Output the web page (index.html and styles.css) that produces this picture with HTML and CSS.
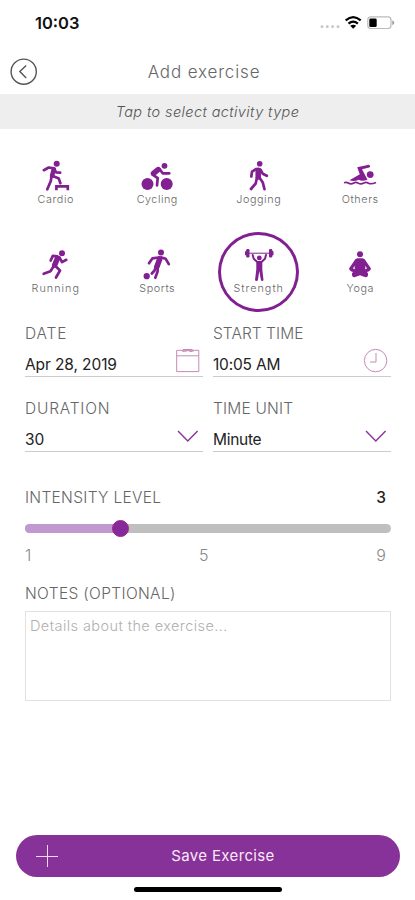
FILE: index.html
```html
<!DOCTYPE html>
<html lang="en">
<head>
<meta charset="utf-8">
<title>Add exercise</title>
<link rel="stylesheet" href="styles.css">
</head>
<body>
<div class="screen">
  <div class="status">
    <span class="clock">10:03</span>
    <svg class="status-icons" viewBox="318 12 80 22" width="80" height="22">
      <g fill="#c4c4c4"><circle cx="322" cy="26.7" r="1.4"/><circle cx="327.3" cy="26.7" r="1.4"/><circle cx="332.6" cy="26.7" r="1.4"/><circle cx="338" cy="26.7" r="1.4"/></g>
      <g fill="none" stroke="#000" stroke-width="2.2"><path d="M345.7 20.4Q353.2 14 360.7 20.4"/><path d="M348.5 23.7Q353.2 19.7 357.9 23.7"/></g>
      <path d="M350.2 25.7Q353.2 23.6 356.2 25.7L353.2 28.8Z"/>
      <rect x="367.8" y="16.9" width="23.2" height="11.6" rx="3" fill="none" stroke="#bbb" stroke-width="1.2"/>
      <path d="M392.3 20.2Q396.4 22.7 392.3 25.2Z" fill="#999"/>
      <rect x="369.3" y="18.5" width="7.4" height="8.6" rx="1.4"/>
    </svg>
  </div>
  <header class="header">
    <svg class="back" viewBox="0 0 28 28" width="28" height="28"><circle cx="13.7" cy="13.7" r="12.6"/><path d="M16.2 7.4L9.8 13.6L16.2 20"/></svg>
    <h1 class="title">Add exercise</h1>
  </header>
  <p class="hint"><span>Tap to select activity type</span></p>

  <div class="activities">
    <div class="tile">
      <svg viewBox="39 160 34 33" width="34" height="33"><circle cx="56.7" cy="163.8" r="3"/><g class="limb"><path class="w4" d="M53.8 169.2L52 176"/><path d="M54 168.4L48.7 167.5L43.8 170.2M54.5 169L56 172.3L60.2 172.6M51.6 176L50.8 181L47.3 189.3M52.8 176L58.8 178.6L60.4 183.2"/><path class="square" d="M56.4 190.3V186.3H67.8V190.3"/></g></svg>
      <span class="name cardio">Cardio</span>
    </div>
    <div class="tile">
      <svg viewBox="140.5 160 34 33" width="34" height="33"><circle cx="148" cy="184" r="6"/><circle cx="167.2" cy="184" r="6"/><circle cx="165" cy="165.8" r="2.9"/><g class="limb"><path class="w5" d="M158.6 169.6L154 173.4"/><path d="M160 169L163.2 173.3H169.8M153.2 174.6L158.2 178.2L157.5 185.3"/></g></svg>
      <span class="name cycling">Cycling</span>
    </div>
    <div class="tile">
      <svg viewBox="242 160 34 33" width="34" height="33"><circle cx="259.7" cy="163.8" r="2.8"/><g class="limb"><path class="w5" d="M258.2 170.2V177"/><path d="M256 169L252 171.7L251.3 176.5M260.5 169.6L262.7 173.7L266.8 175.8M257 177.5L255.7 183.5L251 189M259 177L262.8 182.6L264.5 189.2"/></g></svg>
      <span class="name jogging">Jogging</span>
    </div>
    <div class="tile">
      <svg viewBox="343 160 34 33" width="34" height="33"><circle cx="370.2" cy="174.6" r="3.4"/><path d="M349.5 180.3L359.8 174.2L357.2 167.2L368.8 164.8Q371.3 166 369.3 167.6L362 169.2L367.5 179.7Q362 181.7 358.7 179.8Q354 182 349.5 180.3Z"/><path class="wave" d="M344 182.8Q346.5 181.8 348.7 183.2Q351 184.6 353.8 182.9Q356 181.7 358.5 183.2Q361 184.6 363.8 182.9Q366.2 181.7 368.5 183.2Q371 184.6 376 182.5"/></svg>
      <span class="name others">Others</span>
    </div>
    <div class="tile">
      <svg viewBox="39 248.5 34 33" width="34" height="33"><circle cx="62" cy="252.8" r="3"/><g class="limb"><path class="w5" d="M57.4 258L54.7 264.5"/><path d="M57.5 255.8L52.8 255.4L50.7 260M59.5 257L62 261.6L66.3 259.3M53.8 265.5L50.5 270.7L43.7 273.3M55.4 265.5L60 270L56 277"/></g></svg>
      <span class="name running">Running</span>
    </div>
    <div class="tile">
      <svg viewBox="141 248.5 34 33" width="34" height="33"><circle cx="162" cy="252" r="3"/><circle cx="147.7" cy="275.7" r="3.1"/><g class="limb"><path class="w5" d="M160.8 258.3L158 266"/><path d="M159.5 257L153.5 257.8L150 262.7M162.5 257L166.7 258.3L169.8 263.7M158.7 266L158.6 271L156.3 277.3M156.7 266L155.6 270L152.8 273"/></g></svg>
      <span class="name sports">Sports</span>
    </div>
    <div class="tile selected">
      <svg viewBox="242 248.5 34 33" width="34" height="33"><circle cx="259.3" cy="257.4" r="2.4"/><rect x="246.2" y="248.6" width="3.3" height="8.4" rx="1.2"/><rect x="269" y="248.6" width="3.3" height="8.4" rx="1.2"/><rect x="245" y="250.6" width="2" height="4.4" rx="1"/><rect x="271.5" y="250.6" width="2" height="4.4" rx="1"/><path d="M249 252.2H269.5V253.2H249Z"/><path d="M256.3 260.5H262.3V269L263.5 279.7Q262.6 281 261 280L259.3 270.5L257.8 280Q256 281 255 279.7L256.3 269Z"/><g class="limb thin"><path d="M252.7 254.5L253.7 258.2L257 261.2M266 254.5L265 258.2L261.7 261.2"/></g></svg>
      <span class="name strength">Strength</span>
    </div>
    <div class="tile">
      <svg viewBox="343 248.5 34 33" width="34" height="33"><circle cx="360" cy="253.8" r="3"/><path d="M357.2 257.8H362.8Q365.4 258.5 366.2 261L371 268Q370.8 270.3 366.8 271.6Q369 273 367.5 276Q366 277.7 360 274.8Q354 277.7 352.5 276Q351 273 353.2 271.6Q349.2 270.3 349 268L353.8 261Q354.6 258.5 357.2 257.8Z"/><path d="M354.4 265.3L353 268L354.9 268.8ZM365.6 265.3L367 268L365.1 268.8Z" class="hole"/></svg>
      <span class="name yoga">Yoga</span>
    </div>
  </div>

  <div class="fields">
    <div class="field">
      <label class="label date">DATE</label>
      <div class="value"><span class="v-date">Apr 28, 2019</span>
        <svg class="pic faint" viewBox="0 0 26 26" width="26" height="26"><path d="M1.7 2.3H23.8V23.6H1.7ZM1.7 7.8H23.8"/><path d="M6.5 2.7Q9 4.7 12.8 2.5Q16 4.7 19 2.7M8 1.5H17.5"/></svg></div>
    </div>
    <div class="field">
      <label class="label start">START TIME</label>
      <div class="value"><span class="v-time">10:05 AM</span>
        <svg class="pic faint" viewBox="0 0 26 26" width="26" height="26"><circle cx="12.6" cy="12.6" r="11.2"/><path d="M13 5V14H7"/></svg></div>
    </div>
    <div class="field">
      <label class="label duration">DURATION</label>
      <div class="value"><span class="v-num">30</span>
        <svg class="pic" viewBox="0 0 26 26" width="26" height="26"><path d="M3 8L12.8 18L22.6 8"/></svg></div>
    </div>
    <div class="field">
      <label class="label unit">TIME UNIT</label>
      <div class="value"><span class="v-unit">Minute</span>
        <svg class="pic" viewBox="0 0 26 26" width="26" height="26"><path d="M3 8L12.8 18L22.6 8"/></svg></div>
    </div>
  </div>

  <div class="intensity">
    <div class="row"><span class="label level">INTENSITY LEVEL</span><span class="level-value">3</span></div>
    <div class="track"><div class="fill"><span class="thumb"></span></div></div>
    <div class="scale"><span>1</span><span>5</span><span>9</span></div>
  </div>

  <div class="notes">
    <span class="label optional">NOTES (OPTIONAL)</span>
    <div class="box"><span class="placeholder">Details about the exercise...</span></div>
  </div>

  <div class="save">
    <svg class="plus" viewBox="0 0 24 24" width="24" height="24"><path d="M1 12.5H23M12.5 1V23"/></svg>
    <span class="save-text">Save Exercise</span>
  </div>
  <div class="home"></div>
</div>
</body>
</html>
```
FILE: styles.css
```css
* { box-sizing: border-box; }
body { margin: 0; background: #fff; font-family: Inter, "Liberation Sans", sans-serif; }
.screen { width: 415px; height: 900px; display: flex; flex-direction: column; background: #fff; overflow: hidden; }
span, label { white-space: nowrap; }

.status { height: 50px; display: flex; justify-content: space-between; padding: 12px 17px 0 35px; }
.clock { font-size: 16.5px; font-weight: 600; line-height: 22px; color: #111; }

.header { height: 44px; display: grid; grid-template-columns: 28px 1fr 28px; align-items: center; padding: 0 14px 0 10px; }
.back { fill: none; stroke: #555; stroke-width: 1.4; }
.title { margin: 0 3px 0 0; text-align: center; font-size: 17px; font-weight: 300; line-height: 24px; letter-spacing: 0.85px; color: #666; }
.hint { margin: 0; height: 35px; background: #eee; text-align: center; font-size: 14.5px; font-style: italic; font-weight: 300; line-height: 35px; letter-spacing: 0.4px; color: #555; }

.activities { display: grid; grid-template-columns: repeat(4, 101.5px); grid-auto-rows: 80px; row-gap: 8.5px; padding: 14px 0 0 5px; }
.tile { width: 81px; height: 80px; justify-self: center; display: flex; flex-direction: column; align-items: center; padding-top: 17px; border-radius: 50%; fill: #821f91; }
.selected { box-shadow: inset 0 0 0 3px #821f91; }
.tile svg { flex: none; }
.limb { fill: none; stroke: #821f91; stroke-width: 2.7; stroke-linecap: round; stroke-linejoin: round; }
.thin { stroke-width: 2; }
.w4 { stroke-width: 4.5; }
.w5 { stroke-width: 5.5; }
.square { stroke-linecap: butt; stroke-linejoin: miter; }
.wave { fill: none; stroke: #821f91; stroke-width: 1.7; }
.hole { fill: #fff; }
.name { font-size: 10.8px; font-weight: 300; line-height: 14px; letter-spacing: 0.6px; color: #666; }
.cycling { letter-spacing: 0.5px; }
.running, .strength { letter-spacing: 1px; }

.fields { display: grid; grid-template-columns: 178px 178px; column-gap: 10px; grid-auto-rows: 75px; padding: 10.5px 0 0 25px; }
.field { display: flex; flex-direction: column; }
.label { font-size: 15.5px; font-weight: 300; line-height: 24px; letter-spacing: 0.3px; color: #666; }
.date { letter-spacing: 0.9px; }
.start { letter-spacing: 0.05px; }
.duration { letter-spacing: 0.8px; }
.unit { letter-spacing: 0.2px; }
.value { height: 31px; display: flex; align-items: center; justify-content: space-between; border-bottom: 1px solid #ccc; padding: 0 2px 0 0; font-size: 15.5px; line-height: 22px; color: #222; }
.value span { padding-top: 8px; }
.v-date { letter-spacing: -0.1px; }
.v-time { letter-spacing: -0.2px; }
.v-unit { letter-spacing: -0.3px; }
.pic { fill: none; stroke: #8a3299; stroke-width: 1.4; }
.faint { stroke: #c58ab4; stroke-width: 1; }

.intensity { padding: 14px 24px 0 25px; }
.row { display: flex; justify-content: space-between; padding-right: 5px; }
.level-value { font-size: 15.5px; font-weight: 500; line-height: 24px; color: #222; }
.track { height: 9px; margin-top: 14px; border-radius: 5px; background: #bfbfbf; }
.fill { width: 96px; height: 9px; border-radius: 5px 0 0 5px; background: #c198cf; display: flex; align-items: center; justify-content: flex-end; }
.thumb { flex: none; width: 17px; height: 17px; margin-right: -8px; border-radius: 50%; background: #842a9a; border: 1px solid #a22585; }
.scale { display: flex; justify-content: space-between; margin-top: 10px; padding-right: 5px; font-size: 16px; font-weight: 300; line-height: 24px; color: #888; }

.notes { display: flex; flex-direction: column; padding: 15px 24px 0 25px; }
.optional { letter-spacing: 0.35px; }
.box { height: 90px; margin-top: 5px; border: 1px solid #e2e2e2; padding: 2px 4px; }
.placeholder { display: block; font-size: 14.5px; font-weight: 300; line-height: 24px; color: #b0b0b0; letter-spacing: 0.42px; }

.save { width: 384px; height: 42px; margin: auto auto 0 16px; border-radius: 21px; background: #873299; display: grid; grid-template-columns: 24px 1fr; align-items: center; padding: 0 11px 0 19px; }
.plus { fill: none; stroke: #f3d9f0; stroke-width: 1; }
.save-text { text-align: center; font-size: 15px; line-height: 24px; letter-spacing: 0.35px; color: #fce8fa; padding-right: 2px; }
.home { flex: none; width: 148px; height: 5px; margin: 10px 0 8px 134px; border-radius: 3px; background: #000; }
```
